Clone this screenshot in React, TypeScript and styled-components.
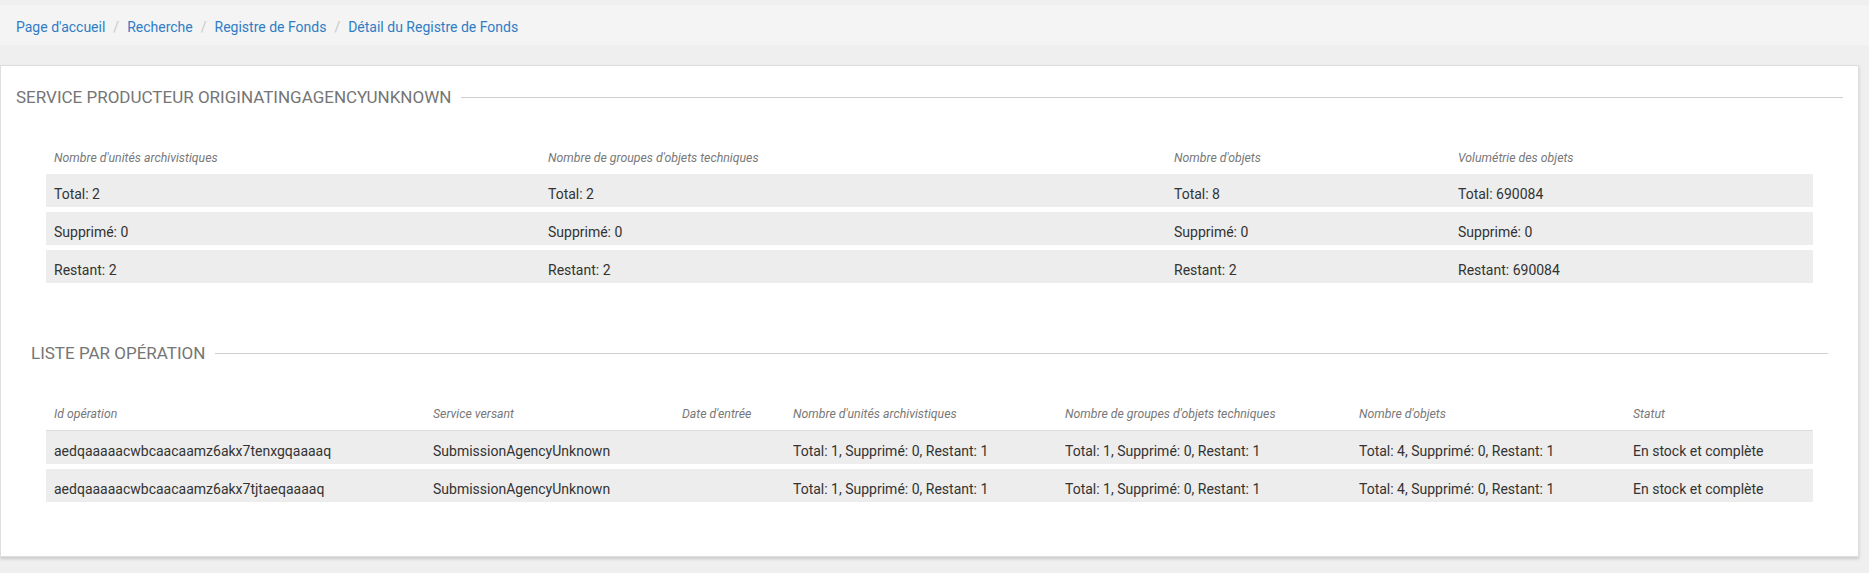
import React from "react";
import styled, { createGlobalStyle } from "styled-components";

const Global = createGlobalStyle`
  html, body { margin: 0; padding: 0; }
  body {
    background: #efefef;
    font-family: Roboto, "Liberation Sans", Arial, sans-serif;
    color: #333;
  }
`;

const Page = styled.div`
  width: 1869px;
  min-height: 573px;
  display: flex;
  flex-direction: column;
`;

const Breadcrumb = styled.nav`
  height: 40px;
  margin-top: 5px;
  background: #f4f4f4;
  display: flex;
  align-items: center;
  padding: 3px 0 0 16px;
  box-sizing: border-box;
  font-size: 14px;
`;

const Crumb = styled.a`
  color: #2f7dc6;
  text-decoration: none;
`;

const Sep = styled.span`
  color: #c8c8c8;
  padding: 0 8px;
`;

const Card = styled.main`
  margin: 20px 10px 0 0;
  background: #fff;
  border: 1px solid #dedede;
  box-shadow: 0 2px 3px rgba(0, 0, 0, 0.16);
  padding: 20px 15px 54px 15px;
`;

const Section = styled.section<{ $inset: number; $top?: number }>`
  padding: 0 ${(p) => p.$inset}px;
  margin-top: ${(p) => p.$top ?? 0}px;
`;

const TitleRow = styled.div`
  display: flex;
  align-items: center;
  height: 22px;
  gap: 10px;
`;

const Title = styled.h2`
  margin: 0;
  font-size: 17px;
  font-weight: 400;
  color: #757575;
  text-transform: uppercase;
  white-space: nowrap;
  line-height: 22px;
`;

const Rule = styled.div`
  flex: 1;
  height: 1px;
  background: #cfcfcf;
`;

const Grid = styled.div<{ $inset: number; $top: number }>`
  margin: ${(p) => p.$top}px ${(p) => p.$inset}px 0;
  display: flex;
  flex-direction: column;
  gap: 5px;
`;

const HeadRow = styled.div<{ $cols: string; $border?: boolean }>`
  display: grid;
  grid-template-columns: ${(p) => p.$cols};
  height: 33px;
  align-items: center;
  border-bottom: ${(p) => (p.$border ? "2px solid #dcdcdc" : "none")};
  margin-bottom: ${(p) => (p.$border ? "-6px" : "-5px")};
`;

const HeadCell = styled.div`
  padding: 0 8px;
  font-size: 12.3px;
  font-style: italic;
  color: #787878;
  white-space: nowrap;
`;

const Row = styled.div<{ $cols: string }>`
  display: grid;
  grid-template-columns: ${(p) => p.$cols};
  height: 33px;
  box-sizing: border-box;
  padding-top: 6px;
  align-items: center;
  background: #ededed;
`;

const Cell = styled.div`
  padding: 0 8px;
  font-size: 14px;
  color: #333;
  white-space: nowrap;
`;

const colsA = "494px 626px 284px 364px";
const colsB = "379px 249px 111px 272px 294px 274px 189px";

const summaryHead = [
  "Nombre d'unités archivistiques",
  "Nombre de groupes d'objets techniques",
  "Nombre d'objets",
  "Volumétrie des objets",
];

const summaryRows = [
  ["Total: 2", "Total: 2", "Total: 8", "Total: 690084"],
  ["Supprimé: 0", "Supprimé: 0", "Supprimé: 0", "Supprimé: 0"],
  ["Restant: 2", "Restant: 2", "Restant: 2", "Restant: 690084"],
];

const opHead = [
  "Id opération",
  "Service versant",
  "Date d'entrée",
  "Nombre d'unités archivistiques",
  "Nombre de groupes d'objets techniques",
  "Nombre d'objets",
  "Statut",
];

const opRows = [
  [
    "aedqaaaaacwbcaacaamz6akx7tenxgqaaaaq",
    "SubmissionAgencyUnknown",
    "",
    "Total: 1, Supprimé: 0, Restant: 1",
    "Total: 1, Supprimé: 0, Restant: 1",
    "Total: 4, Supprimé: 0, Restant: 1",
    "En stock et complète",
  ],
  [
    "aedqaaaaacwbcaacaamz6akx7tjtaeqaaaaq",
    "SubmissionAgencyUnknown",
    "",
    "Total: 1, Supprimé: 0, Restant: 1",
    "Total: 1, Supprimé: 0, Restant: 1",
    "Total: 4, Supprimé: 0, Restant: 1",
    "En stock et complète",
  ],
];

const crumbs = ["Page d'accueil", "Recherche", "Registre de Fonds", "Détail du Registre de Fonds"];

export default function App() {
  return (
    <Page>
      <Global />
      <Breadcrumb>
        {crumbs.map((c, i) => (
          <React.Fragment key={c}>
            {i > 0 && <Sep>/</Sep>}
            <Crumb href="#">{c}</Crumb>
          </React.Fragment>
        ))}
      </Breadcrumb>
      <Card>
        <Section $inset={0}>
          <TitleRow>
            <Title>Service producteur OriginatingAgencyUnknown</Title>
            <Rule />
          </TitleRow>
          <Grid $inset={30} $top={33}>
            <HeadRow $cols={colsA}>
              {summaryHead.map((h) => (
                <HeadCell key={h}>{h}</HeadCell>
              ))}
            </HeadRow>
            {summaryRows.map((r, i) => (
              <Row key={i} $cols={colsA}>
                {r.map((c, j) => (
                  <Cell key={j}>{c}</Cell>
                ))}
              </Row>
            ))}
          </Grid>
        </Section>
        <Section $inset={15} $top={59}>
          <TitleRow>
            <Title>Liste par opération</Title>
            <Rule />
          </TitleRow>
          <Grid $inset={15} $top={33}>
            <HeadRow $cols={colsB} $border>
              {opHead.map((h) => (
                <HeadCell key={h}>{h}</HeadCell>
              ))}
            </HeadRow>
            {opRows.map((r, i) => (
              <Row key={i} $cols={colsB}>
                {r.map((c, j) => (
                  <Cell key={j}>{c}</Cell>
                ))}
              </Row>
            ))}
          </Grid>
        </Section>
      </Card>
    </Page>
  );
}
